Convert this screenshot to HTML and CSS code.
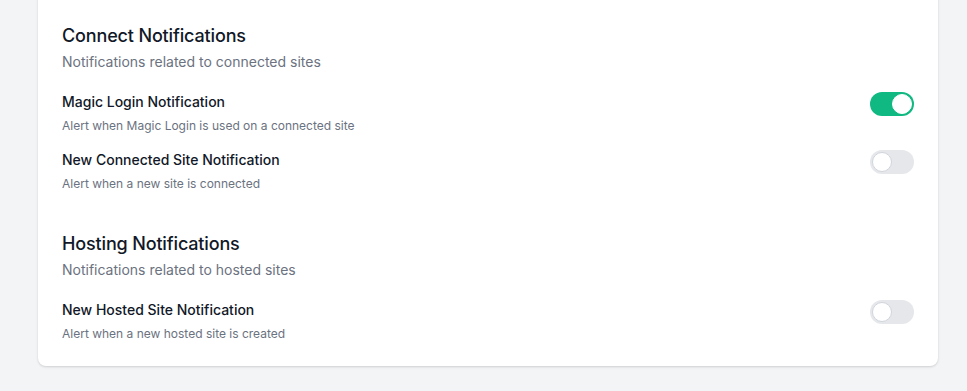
FILE: index.html
```html
<!DOCTYPE html>
<html lang="en">
<head>
    <meta charset="UTF-8">
    <meta name="viewport" content="width=device-width, initial-scale=1.0">
    <title>Notification Settings</title>
    <link rel="stylesheet" href="styles.css">
</head>
<body>
    <div class="page">
        <div class="card">
            <div class="section">
                <h3>Connect Notifications</h3>
                <p class="section-desc">Notifications related to connected sites</p>
                <div class="items">
                    <div class="item">
                        <div class="item-text">
                            <div class="item-title">Magic Login Notification</div>
                            <div class="item-desc">Alert when Magic Login is used on a connected site</div>
                        </div>
                        <span class="toggle on"><span class="knob"></span></span>
                    </div>
                    <div class="item">
                        <div class="item-text">
                            <div class="item-title">New Connected Site Notification</div>
                            <div class="item-desc">Alert when a new site is connected</div>
                        </div>
                        <span class="toggle"><span class="knob"></span></span>
                    </div>
                </div>
            </div>
            <div class="section">
                <h3>Hosting Notifications</h3>
                <p class="section-desc">Notifications related to hosted sites</p>
                <div class="items">
                    <div class="item">
                        <div class="item-text">
                            <div class="item-title">New Hosted Site Notification</div>
                            <div class="item-desc">Alert when a new hosted site is created</div>
                        </div>
                        <span class="toggle"><span class="knob"></span></span>
                    </div>
                </div>
            </div>
        </div>
    </div>
</body>
</html>
```

FILE: styles.css
```css
body {
    font-family: Inter, "Noto Sans", Arial, sans-serif;
    margin: 0;
    background-color: #f3f4f6;
    color: #111827;
}
.page {
    padding: 0 0 25px 38px;
}
.card {
    width: 900px;
    box-sizing: border-box;
    margin-top: -10px;
    padding: 32px 24px 24px;
    background-color: white;
    border-radius: 8px;
    box-shadow: 0 1px 3px rgba(0, 0, 0, 0.1), 0 1px 2px rgba(0, 0, 0, 0.06);
}
.section + .section {
    margin-top: 38px;
}
h3 {
    margin: 0;
    font-size: 18px;
    line-height: 28px;
    font-weight: 500;
    letter-spacing: -0.15px;
    color: #111827;
}
.section-desc {
    margin: 2px 0 0;
    font-size: 14px;
    line-height: 20px;
    color: #6b7280;
}
.items {
    margin-top: 20px;
    display: flex;
    flex-direction: column;
    gap: 16px;
}
.item {
    display: flex;
    justify-content: space-between;
    align-items: flex-start;
}
.item-title {
    font-size: 14px;
    line-height: 20px;
    font-weight: 500;
    color: #111827;
}
.item-desc {
    margin-top: 6px;
    font-size: 12px;
    line-height: 16px;
    color: #6b7280;
}
.toggle {
    display: flex;
    justify-content: flex-start;
    align-items: center;
    width: 44px;
    height: 24px;
    padding: 2px;
    box-sizing: border-box;
    border-radius: 9999px;
    background-color: #e5e7eb;
}
.toggle.on {
    justify-content: flex-end;
    background-color: #10b981;
}
.knob {
    width: 20px;
    height: 20px;
    box-sizing: border-box;
    border-radius: 50%;
    background-color: white;
    border: 1px solid #d1d5db;
}
.toggle.on .knob {
    border-color: white;
}
```
